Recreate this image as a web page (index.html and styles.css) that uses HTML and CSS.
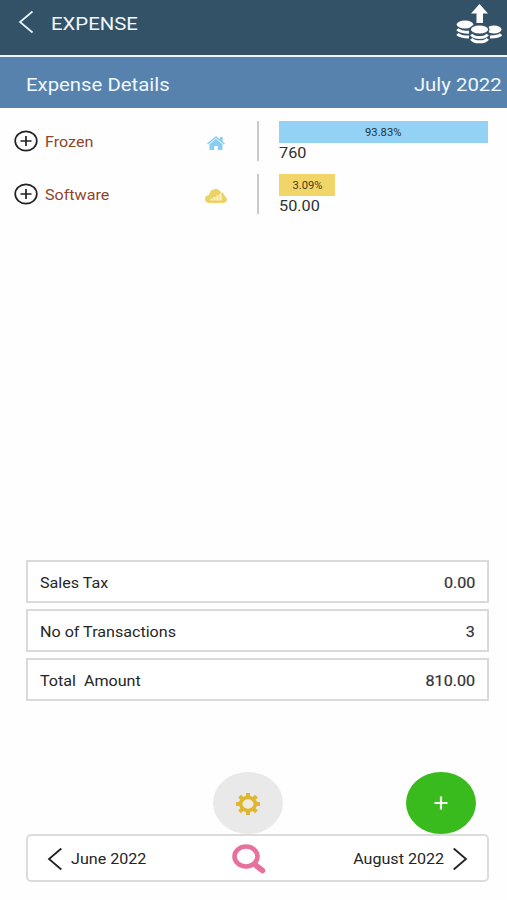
FILE: index.html
```html
<!DOCTYPE html>
<html lang="en">
<head>
<meta charset="utf-8">
<title>Expense</title>
<link rel="stylesheet" href="styles.css">
</head>
<body>
<main class="screen">
  <header class="topbar">
    <svg class="back" width="16" height="24" viewBox="0 0 16 24"><path d="M14.500 1.500 2 12l12.500 10.500"/></svg>
    <h1 class="wide title">EXPENSE</h1>
    <svg class="coins" width="46" height="40" viewBox="0 0 46 40">
      <path d="M23.500 0 32 9.500h-5V19h-6.500V9.500H15z"/>
      <ellipse cx="9" cy="20.500" rx="8.300" ry="4"/>
      <path class="rim" d="M1.300 25.200q3 3 11.700 3M1.300 30q3 3 11.700 3"/>
      <ellipse cx="38" cy="25.500" rx="7.500" ry="4"/>
      <path class="rim" d="M45 30.300q-2 2.500-11 2.800"/>
      <ellipse class="front" cx="23.500" cy="25.500" rx="9.300" ry="4.800"/>
      <path class="rim" d="M15.300 30.500q2 3 8.200 3t8.200-3M15.300 34.800q2 3 8.200 3t8.200-3"/>
    </svg>
  </header>
  <section class="subbar">
    <h2 class="wide">Expense Details</h2>
    <span class="wide end">July 2022</span>
  </section>
  <section class="list">
    <article class="row">
      <svg class="plus" width="24" height="22" viewBox="0 0 24 22"><ellipse cx="12" cy="11" rx="10.800" ry="9.600"/><path d="M6.500 11h11M12 6v10"/></svg>
      <span class="name"><span class="wide">Frozen</span></span>
      <svg class="kind home" width="24" height="16" viewBox="0 0 24 16"><path d="m12 1 4 3.300V2h2.700v4.500L21 8.500l-1 1-8-6.500-8 6.500-1-1z"/><path d="m12 3.800 6.500 5.500V15h-4.700v-4h-3.500v4H5.500V9.300z"/></svg>
      <div class="figures">
        <div class="bar blue" style="width: 209px"><span class="wide mid">93.83%</span></div>
        <span class="wide amount">760</span>
      </div>
    </article>
    <article class="row">
      <svg class="plus" width="24" height="22" viewBox="0 0 24 22"><ellipse cx="12" cy="11" rx="10.800" ry="9.600"/><path d="M6.500 11h11M12 6v10"/></svg>
      <span class="name"><span class="wide">Software</span></span>
      <svg class="kind cloud" width="24" height="16" viewBox="0 0 24 16"><path d="M5 15Q1 14.500 1 11t4-4Q6 1 11.500 1q4 0 5.500 3.500 3.500 0 3.500 3.500 2.500 1 2.500 3.500T19 15z"/><path class="chart" d="M7.500 12.500v-2M10.500 12.500V9M13.500 12.500V7.500M16.500 12.500V5.500"/></svg>
      <div class="figures">
        <div class="bar yellow" style="width: 56px"><span class="wide mid">3.09%</span></div>
        <span class="wide amount">50.00</span>
      </div>
    </article>
  </section>
  <section class="totals">
    <div class="total"><span class="wide">Sales Tax</span><span class="wide end value">0.00</span></div>
    <div class="total"><span class="wide">No of Transactions</span><span class="wide end value">3</span></div>
    <div class="total"><span class="wide">Total&nbsp; Amount</span><span class="wide end value">810.00</span></div>
  </section>
  <div class="actions">
    <button class="round settings" aria-label="Settings">
      <svg width="26" height="24" viewBox="0 0 26 24"><path class="teeth" d="M13 1v22M1 12h24M4.500 4.200l17 15.600M21.500 4.200l-17 15.600"/><ellipse class="ring" cx="13" cy="12" rx="7.300" ry="6.600"/></svg>
    </button>
    <button class="round add" aria-label="Add">
      <svg width="14" height="14" viewBox="0 0 14 14"><path d="M0.500 7h13M7 0.500v13"/></svg>
    </button>
  </div>
  <nav class="months">
    <svg class="arrow prev-arrow" width="16" height="24" viewBox="0 0 16 24"><path d="M14.300 1.500 2 12l12.300 10.500"/></svg>
    <span class="prev"><span class="wide">June 2022</span></span>
    <svg class="search" width="34" height="30" viewBox="0 0 34 30"><ellipse cx="14" cy="12.500" rx="11.500" ry="10"/><path class="handle" d="m24 21.500 6.500 5"/></svg>
    <span class="next"><span class="wide end">August 2022</span></span>
    <svg class="arrow next-arrow" width="16" height="24" viewBox="0 0 16 24"><path d="M1.700 1.500 14 12 1.700 22.500"/></svg>
  </nav>
</main>
</body>
</html>
```
FILE: styles.css
```css
* { box-sizing: border-box; }
body {
  margin: 0;
  background: #fefefe;
  font-family: Roboto, "Liberation Sans", sans-serif;
  font-size: 14px;
  color: #252525;
}
svg { display: block; flex: none; fill: none; stroke-linecap: butt; }
h1, h2 { margin: 0; font-weight: 400; font-size: 18px; }
button { border: 0; padding: 0; }

.screen { height: 900px; display: flex; flex-direction: column; overflow: hidden; }

/* Letterforms are slightly extended across the whole interface. */
.wide { display: inline-block; white-space: nowrap; transform: scaleX(1.15); transform-origin: left center; }
.wide.end { transform-origin: right center; }
.wide.mid { transform-origin: center; transform: scaleX(1.12); }

.topbar {
  height: 57px;
  padding: 0 5px 0 18px;
  display: flex;
  align-items: flex-start;
  background: #345267;
  border-bottom: 2px solid #eef5fa;
  color: #eef8fd;
}
.back { margin-top: 10px; stroke: #e4f4fa; stroke-width: 1.7; }
.wide.title { margin: 13px 0 0 16.5px; line-height: 22px; transform: scaleX(1.13); }
.coins { margin: 4px 0 0 auto; fill: #fff; }
.coins .rim { fill: none; stroke: #fff; stroke-width: 3; }
.coins .front { stroke: #345267; stroke-width: 1.5; }

.subbar {
  height: 51px;
  padding: 3px 5px 0 26px;
  display: flex;
  align-items: center;
  justify-content: space-between;
  background: #5882ae;
  color: #eef8fd;
  font-size: 18px;
}
.subbar .wide { transform: scaleX(1.13); }

.list { padding: 13px 0 0 14px; display: flex; flex-direction: column; gap: 13px; }
.row { height: 40px; display: flex; align-items: center; }
.plus { stroke: #222; stroke-width: 1.7; }
.name { width: 159px; padding: 2px 0 0 7px; color: #8f452c; }
.kind { margin-left: 7px; }
.home { fill: #8bcdf1; margin-top: 3px; }
.cloud { fill: #ead265; margin-top: 4px; }
.chart { stroke: #fff7cf; stroke-width: 2; }
.figures {
  height: 40px;
  margin-left: 29px;
  padding-left: 20px;
  border-left: 2px solid #c9c9c9;
}
.bar { height: 22px; display: flex; align-items: center; justify-content: center; font-size: 10px; color: #20323d; }
.blue { background: #93d2f5; }
.yellow { background: #f2d568; color: #4a3c18; }
.wide.amount { display: block; line-height: 22px; color: #303030; font-size: 14.500px; transform: scaleX(1.12); }

.totals { margin: auto 18px 0 26px; display: flex; flex-direction: column; gap: 6px; }
.total {
  height: 43px;
  padding: 2px 12px 0;
  display: flex;
  align-items: center;
  justify-content: space-between;
  border: 2px solid #dadada;
  background: #fff;
}

.value { color: #333; -webkit-text-stroke: 0.2px #333; }
.actions { height: 62px; margin-top: 71px; padding: 0 31px 0 213px; display: flex; justify-content: space-between; }
.round { width: 70px; height: 62px; border-radius: 50%; display: flex; align-items: center; justify-content: center; }
.settings { background: #e9e9e9; }
.settings svg { margin-top: 2px; }
.teeth { stroke: #dfb62f; stroke-width: 4; }
.ring { stroke: #dfb62f; stroke-width: 3.500; fill: #eeebdf; }
.add { background: #3abb1d; }
.add svg { stroke: #f4fff0; stroke-width: 2.200; }

.months {
  height: 48px;
  margin: 0 18px 18px 26px;
  padding: 1px 19px 0;
  display: flex;
  align-items: center;
  border: 2px solid #dcdcdc;
  border-radius: 5px;
  background: #fff;
}
.arrow { stroke: #222; stroke-width: 1.800; }
.prev { width: 163px; padding-left: 8px; }
.search { margin-left: 6px; stroke: #e8709d; stroke-width: 4.600; }
.handle { stroke-width: 5.5; stroke-linecap: round; }
.next { flex: 1; text-align: right; padding-right: 8px; }
```
